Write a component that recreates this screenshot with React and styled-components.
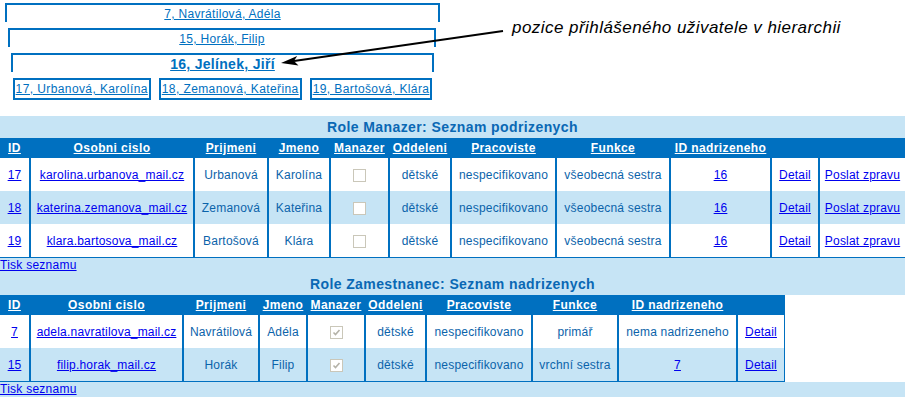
import styled, { createGlobalStyle } from 'styled-components'

const BLUE = '#0070c0'
const LIGHT = '#c6e4f5'
const LINK = '#0000ee'
const TEXT = '#0b63aa'

const GlobalStyle = createGlobalStyle`
  body {
    margin: 0;
    background: #fff;
    font-family: "Liberation Sans", Arial, sans-serif;
    font-size: 12px;
  }
`

const subordinates = [
  { id: '17', email: 'karolina.urbanova_mail.cz', last: 'Urbanová', first: 'Karolína', mgr: false, dept: 'dětské', place: 'nespecifikovano', fn: 'všeobecná sestra', boss: '16' },
  { id: '18', email: 'katerina.zemanova_mail.cz', last: 'Zemanová', first: 'Kateřina', mgr: false, dept: 'dětské', place: 'nespecifikovano', fn: 'všeobecná sestra', boss: '16' },
  { id: '19', email: 'klara.bartosova_mail.cz', last: 'Bartošová', first: 'Klára', mgr: false, dept: 'dětské', place: 'nespecifikovano', fn: 'všeobecná sestra', boss: '16' },
]

const superiors = [
  { id: '7', email: 'adela.navratilova_mail.cz', last: 'Navrátilová', first: 'Adéla', mgr: true, dept: 'dětské', place: 'nespecifikovano', fn: 'primář', boss: null },
  { id: '15', email: 'filip.horak_mail.cz', last: 'Horák', first: 'Filip', mgr: true, dept: 'dětské', place: 'nespecifikovano', fn: 'vrchní sestra', boss: '7' },
]

const headers1 = ['ID', 'Osobni cislo', 'Prijmeni', 'Jmeno', 'Manazer', 'Oddeleni', 'Pracoviste', 'Funkce', 'ID nadrizeneho', '', '']
const widths1 = [31, 164, 74, 62, 59, 62, 105, 114, 101, 48, 85]
const headers2 = ['ID', 'Osobni cislo', 'Prijmeni', 'Jmeno', 'Manazer', 'Oddeleni', 'Pracoviste', 'Funkce', 'ID nadrizeneho', '']
const widths2 = [31, 153, 76, 48, 58, 61, 106, 86, 119, 46]

function Checkbox({ checked }) {
  return (
    <Check>
      {checked && (
        <svg width="11" height="11" viewBox="0 0 11 11">
          <path d="M2.5 5.5 L4.5 7.5 L8.5 3" fill="none" stroke="#b4b2a8" strokeWidth="1.6" />
        </svg>
      )}
    </Check>
  )
}

function PeopleTable({ rows, headers, widths, withMessage, $boxed }) {
  return (
    <Grid $boxed={$boxed}>
      <thead>
        <tr>
          {headers.map((h, i) => (
            <HeadCell key={i} style={{ width: widths[i] - (i === widths.length - 1 ? 0 : 2) }}>
              {h && <HeadLink href="#">{h}</HeadLink>}
            </HeadCell>
          ))}
        </tr>
      </thead>
      <tbody>
        {rows.map((r, i) => (
          <Row key={r.id} $alt={i % 2 === 1}>
            <Cell><CellLink href="#">{r.id}</CellLink></Cell>
            <Cell><CellLink href="#">{r.email}</CellLink></Cell>
            <Cell>{r.last}</Cell>
            <Cell>{r.first}</Cell>
            <Cell><Checkbox checked={r.mgr} /></Cell>
            <Cell>{r.dept}</Cell>
            <Cell>{r.place}</Cell>
            <Cell>{r.fn}</Cell>
            <Cell>{r.boss ? <CellLink href="#">{r.boss}</CellLink> : 'nema nadrizeneho'}</Cell>
            <Cell><CellLink href="#">Detail</CellLink></Cell>
            {withMessage && <Cell><CellLink href="#">Poslat zpravu</CellLink></Cell>}
          </Row>
        ))}
      </tbody>
    </Grid>
  )
}

export default function App() {
  return (
    <>
      <GlobalStyle />
      <Top>
        <Hierarchy>
          <Level $indent={0} $width={435}><LevelLink href="#">7, Navrátilová, Adéla</LevelLink></Level>
          <Level $indent={3} $width={428}><LevelLink href="#">15, Horák, Filip</LevelLink></Level>
          <Level $indent={6} $width={423}><LevelLink href="#" $bold>16, Jelínek, Jiří</LevelLink></Level>
          <Children>
            <ChildBox href="#">17, Urbanová, Karolína</ChildBox>
            <ChildBox href="#">18, Zemanová, Kateřina</ChildBox>
            <ChildBox href="#">19, Bartošová, Klára</ChildBox>
          </Children>
        </Hierarchy>
        <Note>pozice přihlášeného uživatele v hierarchii</Note>
        <ArrowSvg width="905" height="116" viewBox="0 0 905 116">
          <line x1="503" y1="31" x2="294" y2="61" stroke="#000" strokeWidth="2" />
          <polygon points="281,63 297.2,56 293.9,61.1 298.5,65.6" fill="#000" />
        </ArrowSvg>
      </Top>

      <Caption>Role Manazer: Seznam podrizenych</Caption>
      <PeopleTable rows={subordinates} headers={headers1} widths={widths1} withMessage />
      <Footer><FooterLink href="#">Tisk seznamu</FooterLink></Footer>

      <Caption>Role Zamestnanec: Seznam nadrizenych</Caption>
      <PeopleTable rows={superiors} headers={headers2} widths={widths2} $boxed />
      <Footer><FooterLink href="#">Tisk seznamu</FooterLink></Footer>
    </>
  )
}

const Top = styled.div`
  position: relative;
  display: flex;
  align-items: flex-start;
  height: 116px;
`

const Hierarchy = styled.div`
  width: 435px;
  margin-left: 5px;
  padding-top: 3px;
`

const Level = styled.div`
  width: ${p => p.$width - 4}px;
  margin: 0 0 6px ${p => p.$indent}px;
  height: 16px;
  padding-top: 1px;
  border: 2px solid ${BLUE};
  border-bottom: none;
  text-align: center;
  line-height: 16px;
`

const LevelLink = styled.a`
  color: ${BLUE};
  font-size: ${p => (p.$bold ? '14px' : '12px')};
  font-weight: ${p => (p.$bold ? 'bold' : 'normal')};
  letter-spacing: 0.3px;
`

const Children = styled.div`
  display: flex;
  justify-content: center;
  gap: 8px;
  width: 423px;
  margin-left: 6px;
`

const ChildBox = styled.a`
  display: block;
  height: 18px;
  line-height: 18px;
  padding: 0 1px;
  border: 2px solid ${BLUE};
  color: ${BLUE};
  letter-spacing: 0.4px;
  white-space: nowrap;
`

const Note = styled.div`
  margin-left: 72px;
  padding-top: 18px;
  font-size: 17px;
  line-height: 20px;
  font-style: italic;
  letter-spacing: 0.45px;
  color: #000;
  white-space: nowrap;
`

const ArrowSvg = styled.svg`
  position: absolute;
  left: 0;
  top: 0;
  pointer-events: none;
`

const Caption = styled.div`
  background: ${LIGHT};
  height: 22px;
  line-height: 22px;
  text-align: center;
  font-size: 14px;
  font-weight: bold;
  letter-spacing: 0.4px;
  color: #0a68b4;
`

const Grid = styled.table`
  table-layout: fixed;
  border-collapse: separate;
  border-spacing: 0;
  border-bottom: 1px solid ${BLUE};
  border-right: ${p => (p.$boxed ? `1px solid ${BLUE}` : 'none')};
`

const HeadCell = styled.th`
  background: ${BLUE};
  height: 20px;
  padding: 0;
  border-right: 2px solid ${BLUE};
  text-align: center;
  white-space: nowrap;
  &:last-child { border-right: none; }
`

const HeadLink = styled.a`
  color: #fff;
  font-weight: bold;
  font-size: 12px;
  letter-spacing: 0.4px;
`

const Row = styled.tr`
  height: 33px;
  background: ${p => (p.$alt ? LIGHT : '#fff')};
`

const Cell = styled.td`
  padding: 0;
  border-right: 2px solid ${BLUE};
  text-align: center;
  vertical-align: middle;
  color: ${TEXT};
  font-size: 12px;
  letter-spacing: 0.2px;
  white-space: nowrap;
  &:last-child { border-right: none; }
`

const CellLink = styled.a`
  color: ${LINK};
`

const Check = styled.span`
  display: inline-flex;
  align-items: center;
  justify-content: center;
  width: 11px;
  height: 11px;
  border: 1px solid #cac7b9;
  background: #fff;
  vertical-align: middle;
`

const Footer = styled.div`
  background: ${LIGHT};
  height: 15px;
  line-height: 15px;
`

const FooterLink = styled.a`
  color: ${LINK};
  font-size: 12px;
  letter-spacing: 0.25px;
`
